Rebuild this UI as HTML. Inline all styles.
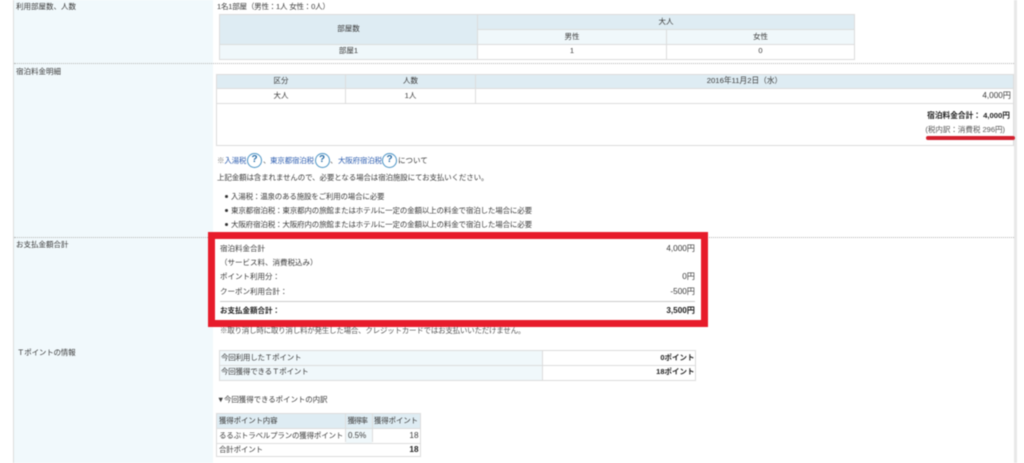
<!DOCTYPE html>
<html lang="ja"><head><meta charset="utf-8"><style>
html,body{margin:0;padding:0;background:#fff}
#p{position:relative;width:1024px;height:463px;overflow:hidden;background:#fff;font-family:"Liberation Sans","Noto Sans CJK JP",sans-serif;font-size:7.5px;color:#3a3a3a;line-height:10px}
#w{position:absolute;left:0;top:0;width:1024px;height:463px;filter:blur(.45px)}
.a{position:absolute;box-sizing:border-box}
.t{position:absolute;white-space:nowrap}
.c{position:absolute;text-align:center;white-space:nowrap;line-height:10px}
.r{position:absolute;text-align:right;white-space:nowrap}
.n{font-size:8.2px}
.b{font-weight:bold;color:#222}
.blue{color:#2f5fb0}
.q{position:absolute;width:15px;height:15px;border:1.5px solid #4a93c4;border-radius:50%;box-sizing:border-box;background:#fff;color:#2a6ea8;font-weight:bold;font-size:10px;line-height:12px;text-align:center}
.dot{position:absolute;left:14px;width:1000px;height:0;border-top:1px dotted #b4b4b4}
</style></head><body><div id="p"><div id="w">
<div class="a" style="left:13px;top:0;width:1px;height:463px;background:#ddd"></div>
<div class="a" style="left:14px;top:0;width:199px;height:463px;background:#f1f9fc"></div>
<div class="a" style="left:1014px;top:0;width:2.5px;height:463px;background:#e8e8e8"></div>
<div class="dot" style="top:63px"></div>
<div class="dot" style="top:237px"></div>

<div class="t" style="left:16px;top:2px">利用部屋数、人数</div>
<div class="t" style="left:16px;top:67px">宿泊料金明細</div>
<div class="t" style="left:16px;top:240px">お支払金額合計</div>
<div class="t" style="left:17px;top:347.5px;letter-spacing:-.2px">Ｔポイントの情報</div>

<div class="t" style="left:217px;top:2px;letter-spacing:-.2px">1名1部屋（男性：1人 女性：0人）</div>

<!-- table 1 -->
<div class="a" style="left:219px;top:14px;width:636px;height:46px;border:1px solid #dcdcdc;background:#fff"></div>
<div class="a" style="left:220px;top:15px;width:258px;height:29px;background:#deecf3"></div>
<div class="a" style="left:478px;top:15px;width:376px;height:14px;background:#deecf3"></div>
<div class="a" style="left:478px;top:30px;width:376px;height:14px;background:#f0f8fb"></div>
<div class="a" style="left:220px;top:45px;width:258px;height:14px;background:#f0f8fb"></div>
<div class="a" style="left:220px;top:44px;width:634px;height:1px;background:#dcdcdc"></div>
<div class="a" style="left:478px;top:29px;width:376px;height:1px;background:#dcdcdc"></div>
<div class="a" style="left:477px;top:15px;width:1px;height:44px;background:#dcdcdc"></div>
<div class="a" style="left:666px;top:30px;width:1px;height:29px;background:#dcdcdc"></div>
<div class="c" style="left:220px;width:257px;top:24px">部屋数</div>
<div class="c" style="left:478px;width:376px;top:17px">大人</div>
<div class="c" style="left:478px;width:188px;top:32px">男性</div>
<div class="c" style="left:667px;width:187px;top:32px">女性</div>
<div class="c" style="left:220px;width:257px;top:46px">部屋1</div>
<div class="c" style="left:478px;width:188px;top:46px">1</div>
<div class="c" style="left:667px;width:187px;top:46px">0</div>

<!-- table 2 -->
<div class="a" style="left:216px;top:74px;width:798px;height:72px;border:1px solid #dcdcdc;background:#fff"></div>
<div class="a" style="left:217px;top:75px;width:796px;height:13px;background:#deecf3"></div>
<div class="a" style="left:217px;top:88px;width:796px;height:1px;background:#dcdcdc"></div>
<div class="a" style="left:217px;top:103px;width:796px;height:1px;background:#dcdcdc"></div>
<div class="a" style="left:345px;top:75px;width:1px;height:28px;background:#dcdcdc"></div>
<div class="a" style="left:475px;top:75px;width:1px;height:28px;background:#dcdcdc"></div>
<div class="c" style="left:217px;width:128px;top:76px">区分</div>
<div class="c" style="left:346px;width:129px;top:76px">人数</div>
<div class="c" style="left:476px;width:537px;top:76px;font-size:7.7px">2016年11月2日（水）</div>
<div class="c" style="left:217px;width:128px;top:91px">大人</div>
<div class="c" style="left:346px;width:129px;top:91px">1人</div>
<div class="r n" style="right:13px;top:91px">4,000円</div>
<div class="r b" style="right:14px;top:111px;font-size:7.7px">宿泊料金合計： 4,000円</div>
<div class="r" style="right:19px;top:124.5px;color:#555">(税内訳：消費税 296円)</div>
<div class="a" style="left:926px;top:136.3px;width:89px;height:4px;border-radius:2px;background:#d3202e"></div>

<!-- notes -->
<div class="t" style="left:217px;top:156px;letter-spacing:-.2px"><span style="color:#777">※</span><span class="blue">入湯税</span></div>
<div class="q" style="left:247px;top:153px">?</div>
<div class="t" style="left:263px;top:156px"><span style="color:#555">、</span></div>
<div class="t blue" style="left:270px;top:156px;letter-spacing:-.2px">東京都宿泊税</div>
<div class="q" style="left:314.5px;top:153px">?</div>
<div class="t" style="left:330px;top:156px"><span style="color:#555">、</span></div>
<div class="t blue" style="left:338px;top:156px;letter-spacing:-.2px">大阪府宿泊税</div>
<div class="q" style="left:382px;top:153px">?</div>
<div class="t" style="left:398px;top:156px">について</div>
<div class="t" style="left:217px;top:172.5px;letter-spacing:-.14px">上記金額は含まれませんので、必要となる場合は宿泊施設にてお支払いください。</div>
<div class="a" style="left:225px;top:194.5px;width:3px;height:3px;border-radius:50%;background:#333"></div>
<div class="a" style="left:225px;top:209px;width:3px;height:3px;border-radius:50%;background:#333"></div>
<div class="a" style="left:225px;top:223px;width:3px;height:3px;border-radius:50%;background:#333"></div>
<div class="t" style="left:231px;top:191.5px;letter-spacing:-.2px">入湯税：温泉のある施設をご利用の場合に必要</div>
<div class="t" style="left:231px;top:205.5px;letter-spacing:-.16px">東京都宿泊税：東京都内の旅館またはホテルに一定の金額以上の料金で宿泊した場合に必要</div>
<div class="t" style="left:231px;top:219.5px;letter-spacing:-.16px">大阪府宿泊税：大阪府内の旅館またはホテルに一定の金額以上の料金で宿泊した場合に必要</div>

<!-- red box -->
<div class="a" style="left:208px;top:232px;width:499.5px;height:94.5px;border:7.5px solid #e71c2b;background:#fff"></div>
<div class="t" style="left:220px;top:243.5px">宿泊料金合計</div>
<div class="t" style="left:220px;top:257.5px">（サービス料、消費税込み）</div>
<div class="t" style="left:220px;top:272px">ポイント利用分：</div>
<div class="t" style="left:220px;top:286.5px">クーポン利用合計：</div>
<div class="t b" style="left:220px;top:306px">お支払金額合計：</div>
<div class="r n" style="right:329px;top:243.5px">4,000円</div>
<div class="r n" style="right:329px;top:272px">0円</div>
<div class="r n" style="right:329px;top:286.5px">-500円</div>
<div class="r b n" style="right:329px;top:306px">3,500円</div>
<div class="a" style="left:220px;top:301px;width:475px;height:1px;background:#ccc"></div>
<div class="t" style="left:220px;top:325.5px;color:#555;letter-spacing:-.23px">※取り消し時に取り消し料が発生した場合、クレジットカードではお支払いいただけません。</div>

<!-- T point table -->
<div class="a" style="left:219px;top:350px;width:477px;height:31px;border:1px solid #dcdcdc;background:#fff"></div>
<div class="a" style="left:220px;top:351px;width:322px;height:29px;background:#f0f8fb"></div>
<div class="a" style="left:220px;top:364.5px;width:475px;height:1px;background:#dcdcdc"></div>
<div class="a" style="left:542px;top:351px;width:1px;height:29px;background:#dcdcdc"></div>
<div class="t" style="left:221px;top:352.5px;letter-spacing:-.2px">今回利用したＴポイント</div>
<div class="t" style="left:221px;top:367px;letter-spacing:-.2px">今回獲得できるＴポイント</div>
<div class="r b" style="right:329.5px;top:352.5px">0ポイント</div>
<div class="r b" style="right:329.5px;top:367px">18ポイント</div>

<div class="t" style="left:217px;top:395px">▼</div>
<div class="t" style="left:224px;top:395px;letter-spacing:-.1px">今回獲得できるポイントの内訳</div>

<!-- breakdown table -->
<div class="a" style="left:216px;top:413px;width:205px;height:44px;border:1px solid #dcdcdc;background:#fff"></div>
<div class="a" style="left:217px;top:414px;width:203px;height:14px;background:#deecf3"></div>
<div class="a" style="left:217px;top:428px;width:203px;height:1px;background:#dcdcdc"></div>
<div class="a" style="left:217px;top:442.5px;width:203px;height:1px;background:#dcdcdc"></div>
<div class="a" style="left:345px;top:414px;width:1px;height:28px;background:#dcdcdc"></div>
<div class="a" style="left:371.5px;top:414px;width:1px;height:28px;background:#dcdcdc"></div>
<div class="a" style="left:346px;top:429px;width:25.5px;height:13.5px;background:#f0f8fb"></div>
<div class="t" style="left:219px;top:416px;letter-spacing:-.2px">獲得ポイント内容</div>
<div class="t" style="left:347.5px;top:416px;letter-spacing:-1px">獲得率</div>
<div class="t" style="left:374px;top:416px;letter-spacing:-.2px">獲得ポイント</div>
<div class="t" style="left:219px;top:430.5px;letter-spacing:-.2px">るるぶトラベルプランの獲得ポイント</div>
<div class="t" style="left:348px;top:430.5px;font-size:8px">0.5%</div>
<div class="r n" style="right:605.5px;top:430.5px">18</div>
<div class="t" style="left:219px;top:445px;letter-spacing:-.2px">合計ポイント</div>
<div class="r b n" style="right:605.5px;top:445px">18</div>
</div></div></body></html>
